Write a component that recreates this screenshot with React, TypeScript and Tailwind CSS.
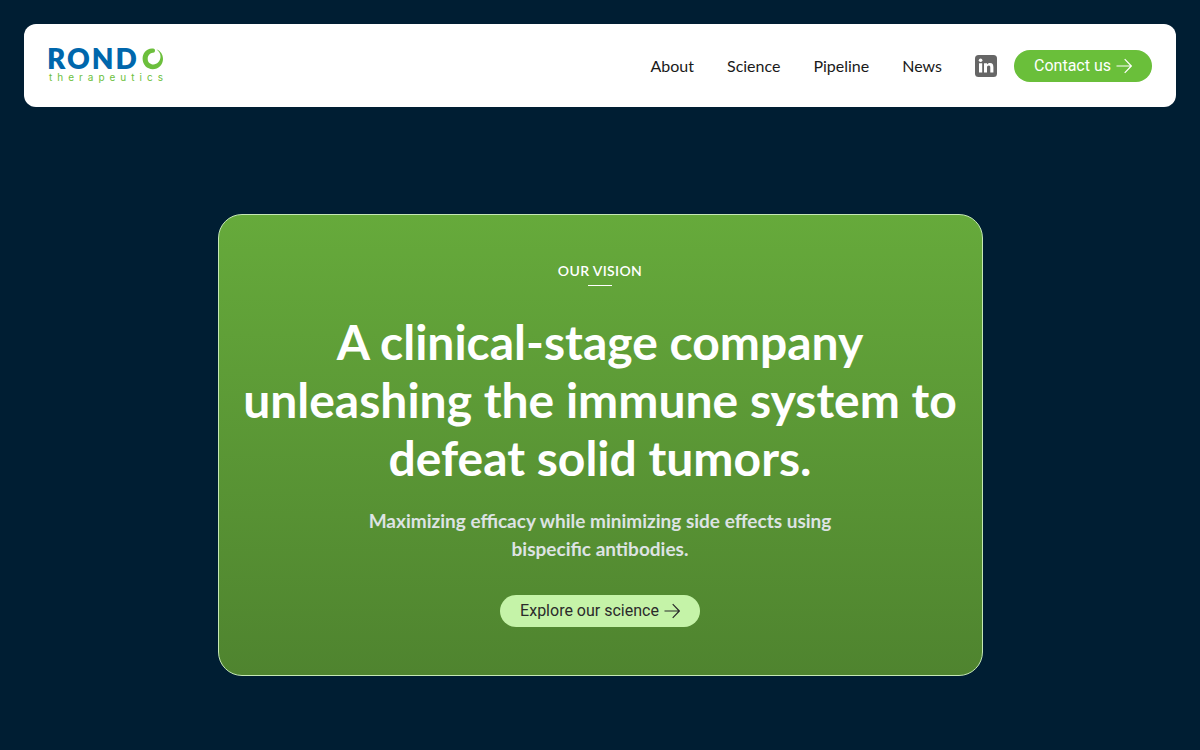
interface NavItem {
  label: string;
  href: string;
}

const navItems: NavItem[] = [
  { label: "About", href: "#about" },
  { label: "Science", href: "#science" },
  { label: "Pipeline", href: "#pipeline" },
  { label: "News", href: "#news" },
];

function ArrowIcon() {
  return (
    <svg
      viewBox="0 0 16 16"
      className="size-4"
      fill="none"
      stroke="currentColor"
      strokeWidth="1.2"
      aria-hidden="true"
    >
      <path d="M0.5 8h15M8.7 1.2 15.3 8l-6.6 6.8" />
    </svg>
  );
}

function LinkedInIcon() {
  return (
    <svg viewBox="0 0 24 24" className="size-6" aria-hidden="true">
      <rect x="1" y="1" width="22" height="22" rx="3.5" fill="#666666" />
      <g fill="#ffffff">
        <circle cx="6.6" cy="6.2" r="1.8" />
        <path d="M5 9.2h3.2v9.3H5zM10 9.2h3v1.4c.5-.9 1.6-1.6 3-1.6 2.5 0 3.4 1.6 3.4 4.2v5.3h-3.1v-4.8c0-1.4-.3-2.2-1.5-2.2s-1.8.9-1.8 2.2v4.8H10z" />
      </g>
    </svg>
  );
}

function Logo() {
  return (
    <a href="/" aria-label="Rondo Therapeutics">
      <svg viewBox="0 0 116 35" className="h-[35px] w-[116px] overflow-visible">
        <text
          x="-1"
          y="21"
          className="fill-[#0067ac] font-['Lato',sans-serif] text-[28px] font-extrabold tracking-[2px]"
        >
          ROND
        </text>
        <path
          fill="#6cbf3c"
          d="M106.5.9C99-.8 94.6 5 94.6 10.8c0 5.8 4.4 10.4 10.1 10.4 5.8 0 10.3-4.4 10.3-10.2 0-4.6-2.4-8.1-6.6-9.8 2.8 2.1 4.3 4.6 4.1 7.8-.3 4.2-3.4 7.4-7.1 7.4-3.2 0-5.7-2.3-5.7-5.5 0-3.9 2.8-6.2 6.5-6.4 1-1 1.1-2.5.3-3.6z"
        />
        <text
          x="1"
          y="33"
          className="fill-[#6cbf3c] font-['Inter',sans-serif] text-[10px] tracking-[5px]"
        >
          therapeutics
        </text>
      </svg>
    </a>
  );
}

function Header() {
  return (
    <header className="flex items-center justify-between rounded-xl bg-white px-6 py-6">
      <Logo />
      <div className="flex items-center gap-4">
        <nav className="mr-4 flex gap-[33px] text-base text-[#1a1a1a]">
          {navItems.map((item) => (
            <a key={item.label} href={item.href} className="hover:underline">
              {item.label}
            </a>
          ))}
        </nav>
        <a href="#linkedin" aria-label="LinkedIn">
          <LinkedInIcon />
        </a>
        <button
          type="button"
          className="flex h-8 items-center gap-[5px] rounded-full bg-[#6abf3a] px-5 font-['Roboto',sans-serif] text-base text-white"
        >
          Contact us
          <ArrowIcon />
        </button>
      </div>
    </header>
  );
}

function VisionCard() {
  return (
    <section className="flex w-full max-w-[765px] flex-col items-center rounded-3xl border border-[#c5e8b5] bg-linear-to-b from-[#66aa3b] to-[#4f842f] px-5 py-12 text-center">
      <p className="text-sm leading-4 font-semibold tracking-wide text-white">
        OUR VISION
      </p>
      <span className="mt-1.5 h-px w-6 bg-white" />
      <h1 className="mt-[27px] text-5xl leading-[58px] font-bold text-white">
        A clinical-stage company unleashing the immune system to defeat solid
        tumors.
      </h1>
      <p className="mt-5 max-w-[480px] text-[19px] leading-7 font-bold text-[#dde3e3]">
        Maximizing efficacy while minimizing side effects using bispecific
        antibodies.
      </p>
      <button
        type="button"
        className="mt-8 flex h-8 items-center gap-[5px] rounded-full bg-[#c5f3a8] px-5 font-['Roboto',sans-serif] text-base text-[#2b2b2b]"
      >
        Explore our science
        <ArrowIcon />
      </button>
    </section>
  );
}

export default function App() {
  return (
    <div className="min-h-screen bg-[#001e33] p-6 font-['Lato',sans-serif]">
      <Header />
      <main className="flex justify-center pt-[107px] pb-12">
        <VisionCard />
      </main>
    </div>
  );
}
